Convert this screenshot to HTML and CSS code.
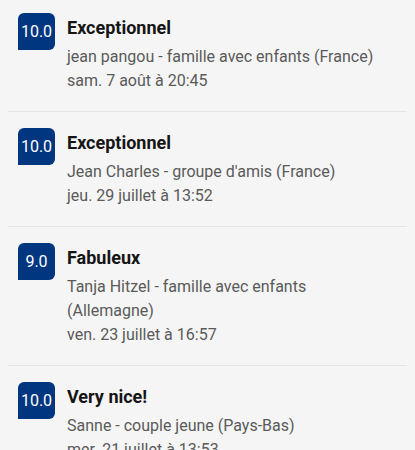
FILE: index.html
```html
<!DOCTYPE html>
<html lang="fr">
<head>
  <meta charset="UTF-8">
  <title>Commentaires</title>
  <link rel="stylesheet" href="styles.css">
</head>
<body>
  <ul class="review-list">
    <li class="review">
      <div class="score">10.0</div>
      <div class="review-body">
        <div class="review-title">Exceptionnel</div>
        <div class="review-meta">jean pangou - famille avec enfants (France)</div>
        <div class="review-meta">sam. 7 août à 20:45</div>
      </div>
    </li>
    <li class="review">
      <div class="score">10.0</div>
      <div class="review-body">
        <div class="review-title">Exceptionnel</div>
        <div class="review-meta">Jean Charles - groupe d'amis (France)</div>
        <div class="review-meta">jeu. 29 juillet à 13:52</div>
      </div>
    </li>
    <li class="review">
      <div class="score">9.0</div>
      <div class="review-body">
        <div class="review-title">Fabuleux</div>
        <div class="review-meta">Tanja Hitzel - famille avec enfants (Allemagne)</div>
        <div class="review-meta">ven. 23 juillet à 16:57</div>
      </div>
    </li>
    <li class="review">
      <div class="score">10.0</div>
      <div class="review-body">
        <div class="review-title">Very nice!</div>
        <div class="review-meta">Sanne - couple jeune (Pays-Bas)</div>
        <div class="review-meta">mer. 21 juillet à 13:53</div>
      </div>
    </li>
  </ul>
</body>
</html>
```

FILE: styles.css
```css
body {
  margin: 0;
  background-color: #f5f5f5;
  font-family: Roboto, "Liberation Sans", sans-serif;
  overflow: hidden;
}

/* list is scrolled a little, first row starts above the fold */
.review-list {
  list-style: none;
  margin: -3px 0 0 0;
  padding: 0 8px;
}

.review {
  display: flex;
  gap: 12px;
  padding: 16px 10px 18px 10px;
  border-bottom: 1px solid #e4e4e4;
}

.score {
  flex: none;
  width: 37px;
  height: 37px;
  background-color: #003580;
  color: #ffffff;
  border-radius: 6px 6px 6px 0;
  font-size: 16px;
  line-height: 37px;
  text-align: center;
}

.review-body {
  flex: 1;
  padding-right: 20px;
}

.review-title {
  font-size: 18px;
  font-weight: 700;
  line-height: 29px;
  margin-bottom: 3px;
  color: #151515;
}

.review-meta {
  font-size: 16px;
  line-height: 24px;
  color: #5a5a5a;
}
```
